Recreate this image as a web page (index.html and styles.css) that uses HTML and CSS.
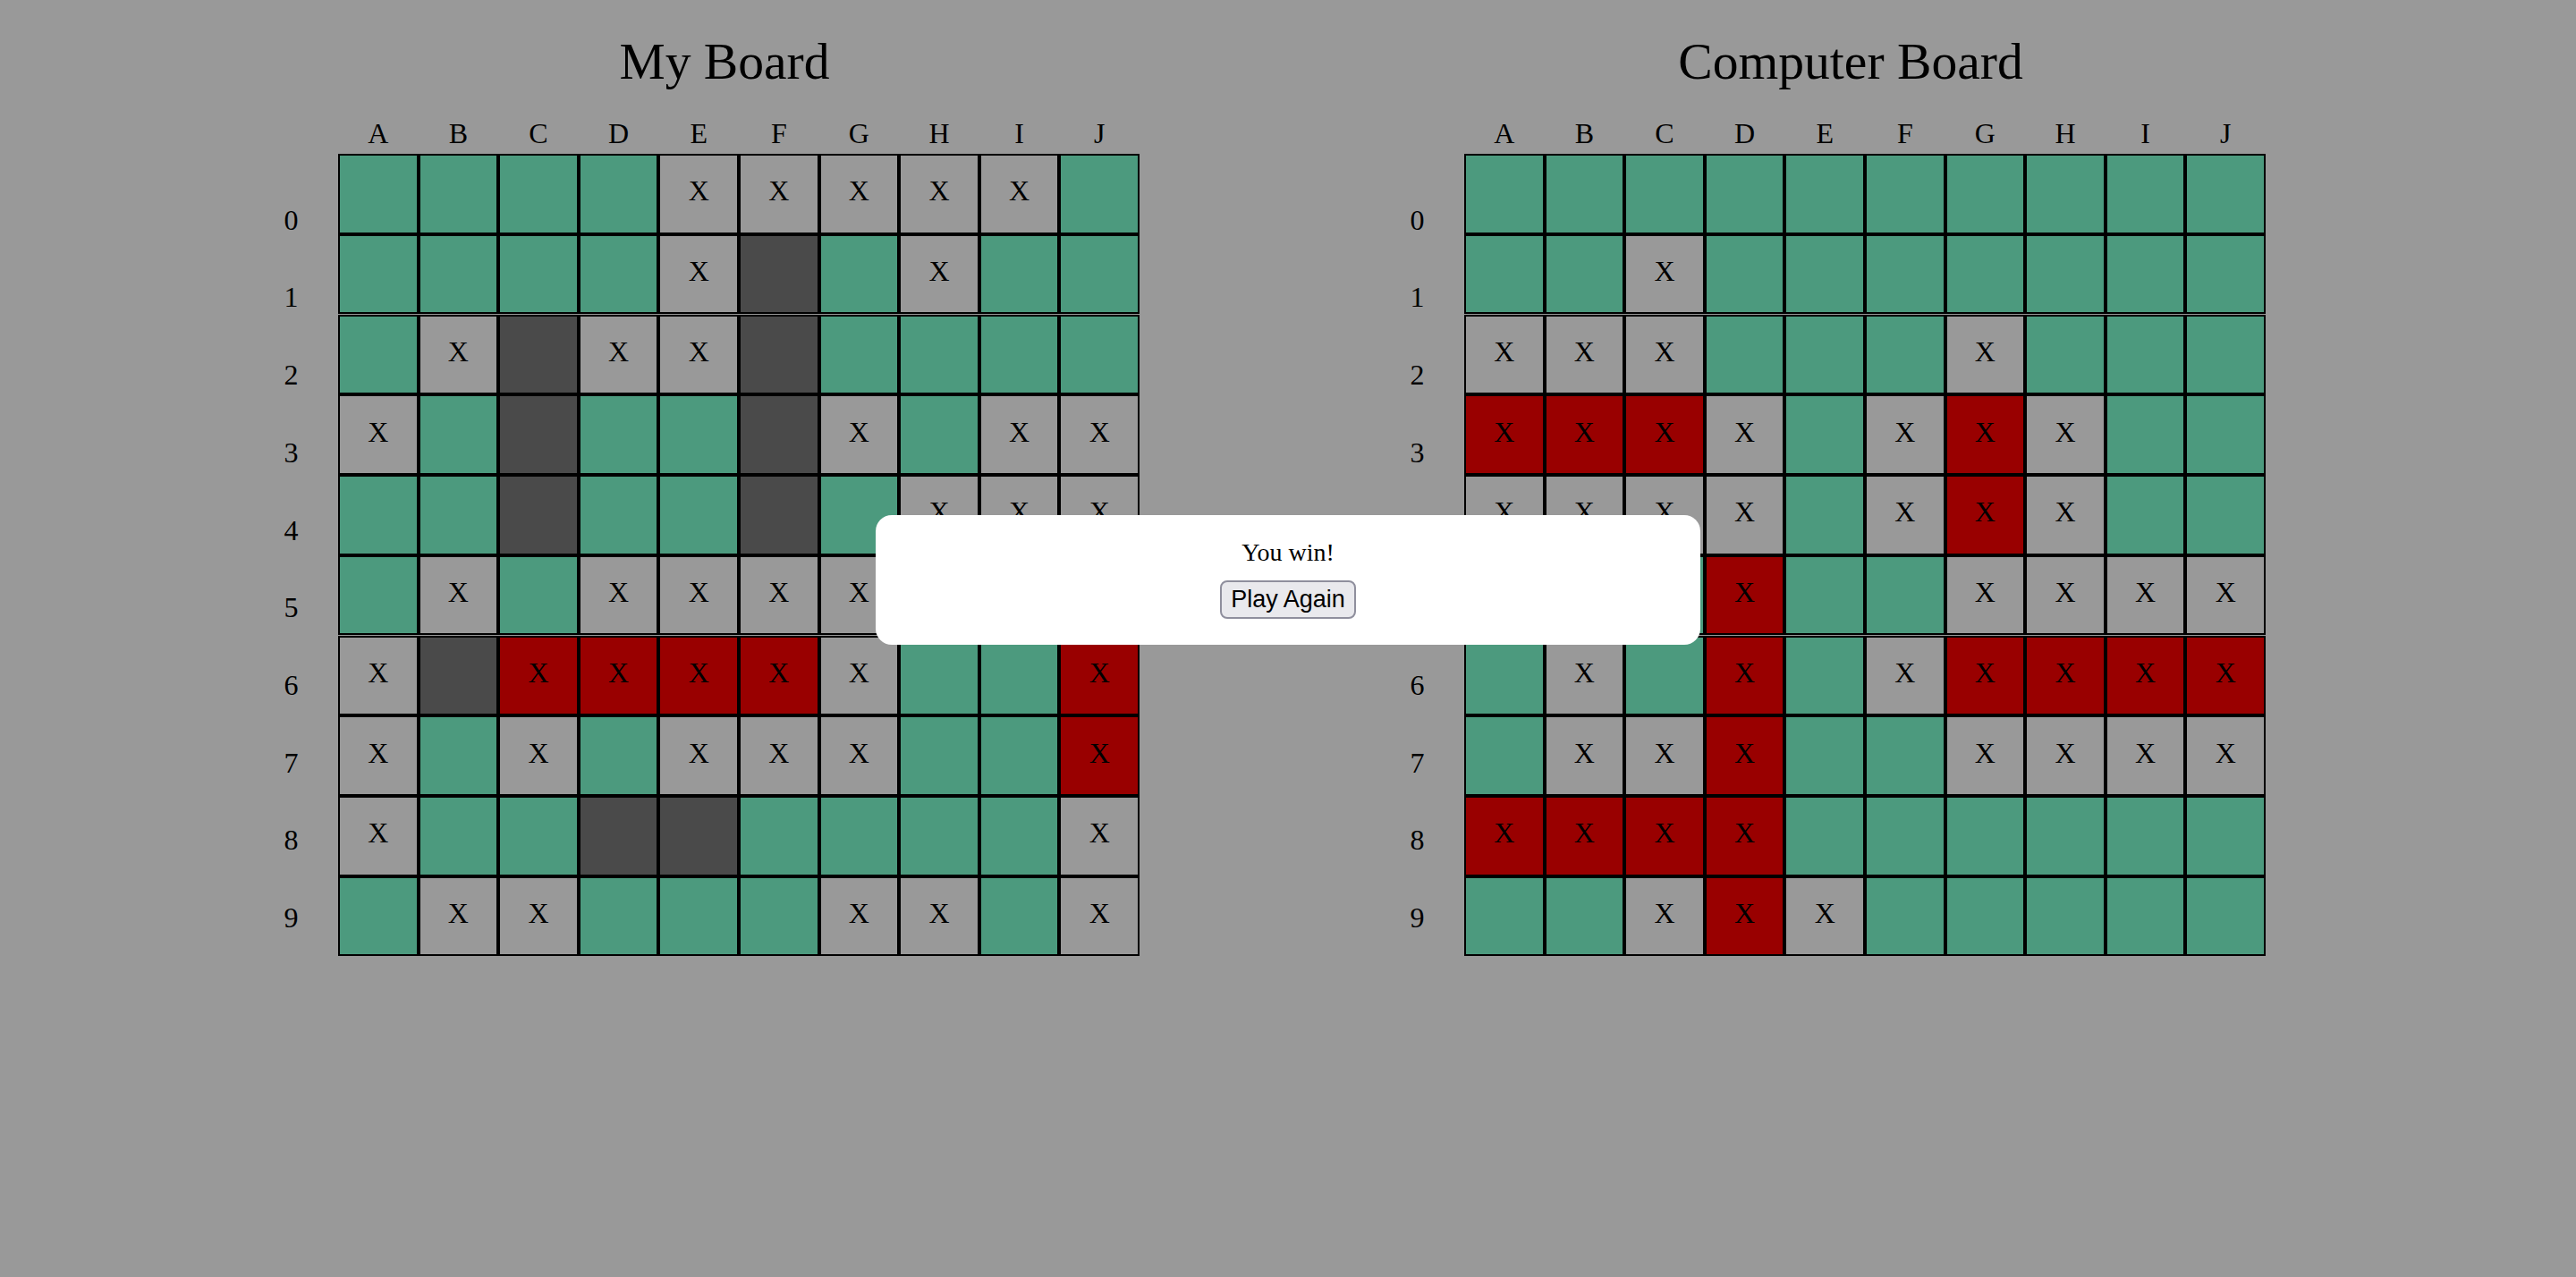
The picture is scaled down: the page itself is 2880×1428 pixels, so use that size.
FILE: index.html
```html
<!DOCTYPE html>
<html lang="en">

<head>
	<meta charset="UTF-8">
	<meta name="viewport" content="width=device-width, initial-scale=1.0">
	<title>Battleship</title>
	<link rel="stylesheet" href="styles.css">
</head>

<body>
	<section class="side">
		<h1 class="side-title">My Board</h1>
		<div class="cols"></div>
		<div class="rows"></div>
		<div class="board" id="myBoard"></div>
	</section>

	<section class="side">
		<h1 class="side-title">Computer Board</h1>
		<div class="cols"></div>
		<div class="rows"></div>
		<div class="board" id="computerBoard"></div>
	</section>

	<div class="modal">
		<p class="modal-text">You win!</p>
		<button class="btn">Play Again</button>
	</div>

	<script>
		// . = water, o = miss, s = ship, h = hit
		const myBoard = [
			'....ooooo.',
			'....os.o..',
			'.osoos....',
			'o.s..so.oo',
			'..s..s.ooo',
			'.o.oooo..h',
			'oshhhho..h',
			'o.o.ooo..h',
			'o..ss....o',
			'.oo...oo.o'
		];
		const computerBoard = [
			'..........',
			'..o.......',
			'ooo...o...',
			'hhho.oho..',
			'oooo.oho..',
			'...h..oooo',
			'.o.h.ohhhh',
			'.ooh..oooo',
			'hhhh......',
			'..oho.....'
		];
		const letters = 'ABCDEFGHIJ';
		const kinds = { '.': 'water', 'o': 'miss', 's': 'ship', 'h': 'hit' };

		document.querySelectorAll('.cols').forEach(el => {
			for (const l of letters) {
				const span = document.createElement('span');
				span.textContent = l;
				el.appendChild(span);
			}
		});

		document.querySelectorAll('.rows').forEach(el => {
			for (let i = 0; i < 10; i++) {
				const span = document.createElement('span');
				span.textContent = i;
				el.appendChild(span);
			}
		});

		function drawBoard(id, rows) {
			const board = document.getElementById(id);
			rows.forEach(row => {
				for (const c of row) {
					const cell = document.createElement('div');
					cell.className = 'cell ' + kinds[c];
					if (c === 'o' || c === 'h') cell.textContent = 'X';
					board.appendChild(cell);
				}
			});
		}

		drawBoard('myBoard', myBoard);
		drawBoard('computerBoard', computerBoard);
	</script>
</body>

</html>
```

FILE: styles.css
```css
/* page */
body {
	margin: 0;
	padding: 36px 0 0 273px;
	min-height: 1428px;
	box-sizing: border-box;
	background: #999999;
	color: #000;
	font-family: 'Liberation Serif', 'Times New Roman', serif;
	display: flex;
	align-items: flex-start;
	gap: 258px;
}

.side {
	display: grid;
	grid-template-columns: 105px 896px;
}

.side-title {
	grid-column: 2;
	margin: 0;
	padding-right: 32px;
	font-size: 57.6px;
	line-height: 66px;
	font-weight: 400;
	text-align: center;
}

/* column letters */
.cols {
	grid-column: 2;
	display: grid;
	grid-template-columns: repeat(10, 1fr);
	margin-top: 29px;
	padding-bottom: 5px;
	font-size: 32px;
	line-height: 36px;
	text-align: center;
}

/* row numbers */
.rows {
	grid-column: 1;
	display: flex;
	flex-direction: column;
	padding-top: 30.8px;
	font-size: 32px;
	text-align: center;
}

.rows span {
	height: 86.7px;
	line-height: 86.7px;
}

.board {
	grid-column: 2;
	display: grid;
	grid-template-columns: repeat(10, 1fr);
	width: 896px;
}

.cell {
	box-sizing: border-box;
	height: 89.6px;
	border: 2px solid #000;
	display: flex;
	justify-content: center;
	align-items: center;
	padding-bottom: 6px;
	font-size: 32px;
}

.water { background: #4c9a7e; }
.miss { background: #999999; }
.ship { background: #4a4a4a; }
.hit { background: #990000; }

/* result popup */
.modal {
	position: fixed;
	top: 576px;
	left: 979px;
	width: 922px;
	height: 145px;
	box-sizing: border-box;
	padding-top: 26px;
	background: #fff;
	border-radius: 18px;
	text-align: center;
}

.modal-text {
	margin: 0;
	font-size: 28px;
	line-height: 31px;
}

.btn {
	margin-top: 16px;
	width: 152px;
	height: 43px;
	padding: 0;
	font-family: 'Liberation Sans', Arial, sans-serif;
	font-size: 27px;
	color: #000;
	background: #e9e9ed;
	border: 2px solid #8f8f9d;
	border-radius: 8px;
}
```
